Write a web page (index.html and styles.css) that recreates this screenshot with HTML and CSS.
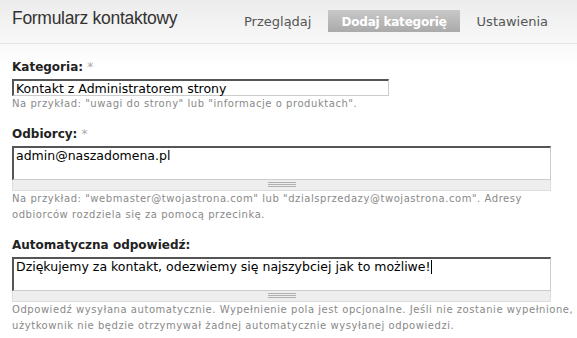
FILE: index.html
```html
<!DOCTYPE html>
<html lang="pl">
<head>
<meta charset="utf-8">
<title>Formularz kontaktowy</title>
<link rel="stylesheet" href="styles.css">
</head>
<body>
<div class="header">
  <h1 class="title">Formularz kontaktowy</h1>
  <ul class="tabs">
    <li class="tab">Przeglądaj</li>
    <li class="tab active">Dodaj kategorię</li>
    <li class="tab">Ustawienia</li>
  </ul>
</div>
<div class="content">
  <div class="field">
    <div class="label">Kategoria: <span class="req">*</span></div>
    <div class="input">Kontakt z Administratorem strony</div>
    <div class="desc">Na przykład: "uwagi do strony" lub "informacje o produktach".</div>
  </div>
  <div class="field">
    <div class="label">Odbiorcy: <span class="req">*</span></div>
    <div class="textarea">admin@naszadomena.pl</div>
    <div class="grippie"><div class="grip-lines"></div></div>
    <div class="desc">Na przykład: "webmaster@twojastrona.com" lub "dzialsprzedazy@twojastrona.com". Adresy<br>odbiorców rozdziela się za pomocą przecinka.</div>
  </div>
  <div class="field">
    <div class="label">Automatyczna odpowiedź:</div>
    <div class="textarea">Dziękujemy za kontakt, odezwiemy się najszybciej jak to możliwe!<span class="caret"></span></div>
    <div class="grippie"><div class="grip-lines"></div></div>
    <div class="desc">Odpowiedź wysyłana automatycznie. Wypełnienie pola jest opcjonalne. Jeśli nie zostanie wypełnione,<br>użytkownik nie będzie otrzymywał żadnej automatycznie wysyłanej odpowiedzi.</div>
  </div>
</div>
</body>
</html>
```
FILE: styles.css
```css
html, body {
  margin: 0;
  padding: 0;
  background: #fff;
  overflow: hidden;
}
body {
  font-family: "DejaVu Sans", Verdana, sans-serif;
  color: #222;
}
.header {
  display: flex;
  align-items: flex-start;
  height: 43px;
  background: linear-gradient(#ececec, #f8f8f8);
  border-bottom: 1px solid #e4e4e4;
}
.title {
  margin: 8px 0 0 12px;
  width: 219px;
  font-family: "Liberation Sans", Arial, sans-serif;
  font-weight: normal;
  font-size: 17.5px;
  line-height: 20px;
  letter-spacing: -0.3px;
  color: #333;
}
.tabs {
  display: flex;
  gap: 4px;
  list-style: none;
  margin: 10px 0 0 0;
  padding: 0;
}
.tab {
  padding: 5px 13px 3px;
  font-size: 13px;
  line-height: 14px;
  color: #555;
  white-space: nowrap;
}
.tab.active {
  background: linear-gradient(#c8c8c8, #aaaaaa);
  color: #fff;
  font-weight: bold;
  font-size: 12px;
  letter-spacing: -0.2px;
}
.content {
  padding: 16px 12px 0;
  background: linear-gradient(#f9f9f9, #ffffff 24px);
}
.field {
  margin-bottom: 15px;
}
.label {
  font-size: 12px;
  line-height: 15px;
  font-weight: bold;
  color: #222;
  margin-bottom: 4px;
}
.req {
  color: #aaa;
  font-weight: normal;
}
.input, .textarea {
  box-sizing: border-box;
  font-size: 12.5px;
  line-height: 15px;
  color: #000;
  background: #fff;
  border-style: solid;
  border-width: 2px 1px 1px 2px;
  border-color: #555 #ccc #ccc #555;
  padding: 0 2px;
  white-space: nowrap;
}
.input {
  width: 377px;
  height: 17px;
}
.textarea {
  width: 539px;
  height: 34px;
}
.caret {
  display: inline-block;
  width: 1px;
  height: 14px;
  background: #000;
  vertical-align: -3px;
}
.grippie {
  box-sizing: border-box;
  width: 539px;
  height: 11px;
  background: #eeeeee;
  border: 1px solid #dddddd;
  border-top: 0;
  display: flex;
  justify-content: center;
  padding-top: 2px;
}
.grip-lines {
  width: 28px;
  height: 5px;
  background: linear-gradient(#b0b0b0 1px, transparent 1px) 0 0 / 100% 2px repeat-y;
}
.desc {
  font-size: 10px;
  line-height: 16px;
  letter-spacing: 0.55px;
  color: #898989;
  white-space: nowrap;
}
```
